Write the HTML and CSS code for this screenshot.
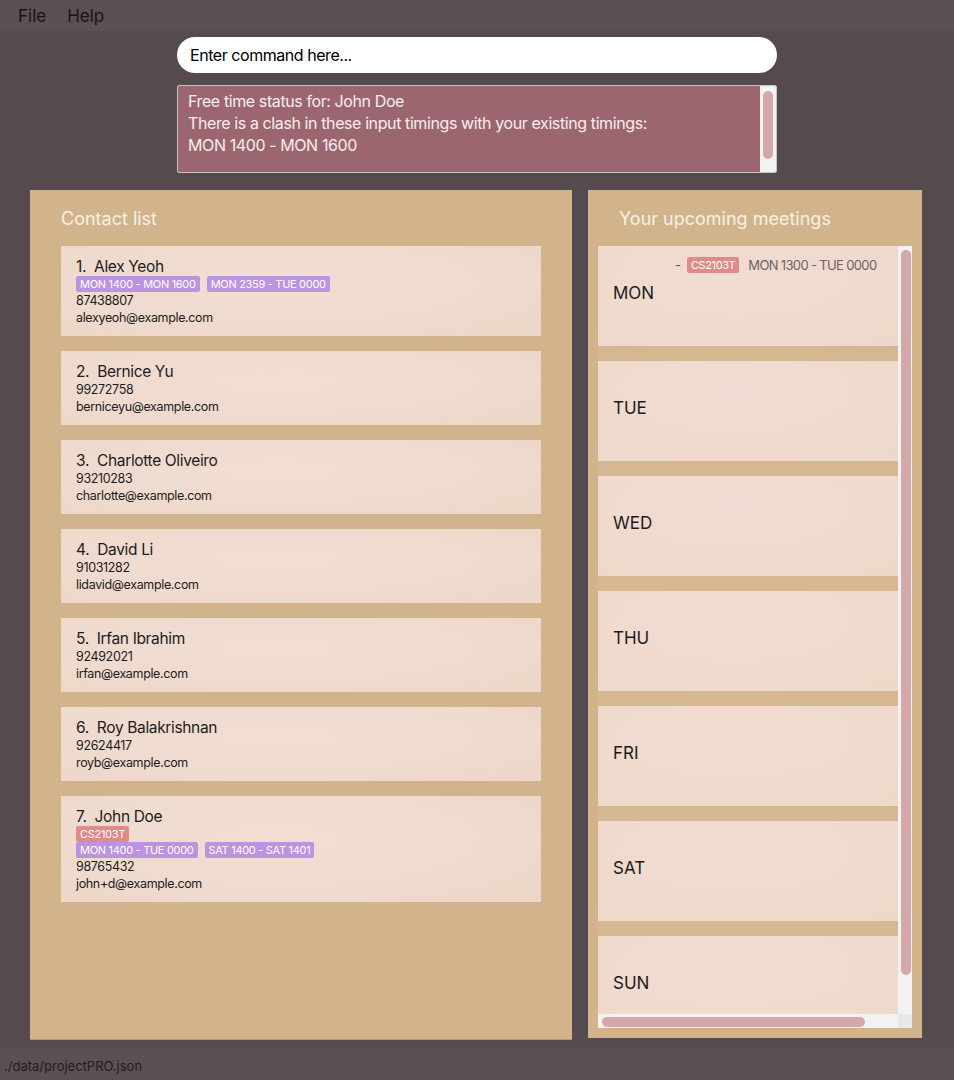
FILE: index.html
```html
<!DOCTYPE html>
<html>
<head>
<meta charset="utf-8">
<link rel="stylesheet" href="styles.css">
</head>
<body>
<div class="menubar">
  <span class="menu-item">File</span>
  <span class="menu-item">Help</span>
</div>
<div class="top">
  <div class="command">Enter command here...</div>
  <div class="result">
    <div class="result-text">Free time status for: John Doe<br>There is a clash in these input timings with your existing timings:<br>MON 1400 - MON 1600</div>
    <div class="vbar result-bar"><div class="thumb"></div></div>
  </div>
</div>
<div class="panels">
  <section class="panel contacts">
    <h2 class="panel-title">Contact list</h2>
    <div class="contact-list">
      <div class="card">
        <div class="name">1.&nbsp; Alex Yeoh</div>
        <div class="tags"><span class="tag time">MON 1400 - MON 1600</span><span class="tag time">MON 2359 - TUE 0000</span></div>
        <div class="line">87438807</div>
        <div class="line">alexyeoh@example.com</div>
      </div>
      <div class="card">
        <div class="name">2.&nbsp; Bernice Yu</div>
        <div class="line">99272758</div>
        <div class="line">berniceyu@example.com</div>
      </div>
      <div class="card">
        <div class="name">3.&nbsp; Charlotte Oliveiro</div>
        <div class="line">93210283</div>
        <div class="line">charlotte@example.com</div>
      </div>
      <div class="card">
        <div class="name">4.&nbsp; David Li</div>
        <div class="line">91031282</div>
        <div class="line">lidavid@example.com</div>
      </div>
      <div class="card">
        <div class="name">5.&nbsp; Irfan Ibrahim</div>
        <div class="line">92492021</div>
        <div class="line">irfan@example.com</div>
      </div>
      <div class="card">
        <div class="name">6.&nbsp; Roy Balakrishnan</div>
        <div class="line">92624417</div>
        <div class="line">royb@example.com</div>
      </div>
      <div class="card">
        <div class="name">7.&nbsp; John Doe</div>
        <div class="tags"><span class="tag mod">CS2103T</span></div>
        <div class="tags"><span class="tag time">MON 1400 - TUE 0000</span><span class="tag time">SAT 1400 - SAT 1401</span></div>
        <div class="line">98765432</div>
        <div class="line">john+d@example.com</div>
      </div>
    </div>
  </section>
  <section class="panel meetings">
    <h2 class="panel-title">Your upcoming meetings</h2>
    <div class="meeting-area">
      <div class="meeting-viewport">
        <div class="day">
          <div class="meeting-row"><span class="dash">-</span><span class="tag mod">CS2103T</span><span class="mtime">MON 1300 - TUE 0000</span></div>
          <div class="day-label">MON</div>
        </div>
        <div class="day"><div class="day-label">TUE</div></div>
        <div class="day"><div class="day-label">WED</div></div>
        <div class="day"><div class="day-label">THU</div></div>
        <div class="day"><div class="day-label">FRI</div></div>
        <div class="day"><div class="day-label">SAT</div></div>
        <div class="day"><div class="day-label">SUN</div></div>
      </div>
      <div class="vbar list-vbar"><div class="thumb"></div></div>
      <div class="hbar"><div class="thumb"></div></div>
      <div class="corner"></div>
    </div>
  </section>
</div>
<div class="statusbar">./data/projectPRO.json</div>
</body>
</html>
```
FILE: styles.css
```css
html, body {
  margin: 0;
  padding: 0;
}
body {
  width: 954px;
  height: 1080px;
  background: #554a4d;
  font-family: Inter, "Open Sans", "Liberation Sans", sans-serif;
  display: flex;
  flex-direction: column;
  overflow: hidden;
}
.menubar {
  height: 31px;
  background: #5b5053;
  display: flex;
  align-items: center;
  padding-left: 18px;
  gap: 21px;
  flex-shrink: 0;
}
.menu-item {
  font-size: 17px;
  color: #161616;
}
.top {
  display: flex;
  flex-direction: column;
  align-items: center;
}
.command {
  margin-top: 6px;
  width: 600px;
  height: 36px;
  box-sizing: border-box;
  background: #ffffff;
  border-radius: 18px;
  padding-left: 13px;
  display: flex;
  align-items: center;
  font-size: 16px;
  letter-spacing: -0.45px;
  color: #000;
}
.result {
  margin-top: 12px;
  width: 600px;
  height: 88px;
  box-sizing: border-box;
  border: 1px solid #c9c2c3;
  border-radius: 2px;
  background: #9c6670;
  display: flex;
  overflow: hidden;
}
.result-text {
  flex: 1;
  padding: 4px 10px 0 10px;
  font-size: 16px;
  line-height: 22px;
  letter-spacing: -0.4px;
  color: #f6eeef;
}
.vbar {
  background: #f2f2f2;
  display: flex;
  flex-direction: column;
}
.result-bar {
  width: 16px;
  padding: 5px 3px 0 3px;
  box-sizing: border-box;
}
.result-bar .thumb {
  height: 68px;
  background: #d4a8a9;
  border-radius: 5px;
}
.panels {
  margin-top: 17px;
  display: flex;
  padding-left: 30px;
  gap: 16px;
  align-items: flex-start;
}
.panel {
  background: #d1b48c;
  display: flex;
  flex-direction: column;
}
.panel-title {
  margin: 0;
  height: 55px;
  padding-left: 31px;
  display: flex;
  align-items: center;
  font-size: 18px;
  font-weight: 400;
  color: #f8f0e6;
  padding-top: 1px;
  box-sizing: border-box;
}
.contacts {
  width: 542px;
  height: 850px;
}
.contact-list {
  flex: 1;
  padding: 1px 31px 0 31px;
  display: flex;
  flex-direction: column;
  gap: 15px;
  border-bottom: 1px solid #b59a76;
}
.card {
  background: radial-gradient(ellipse at 45% 40%, #f1ddd2 0%, #efdace 60%, #ebd6c7 100%);
  padding: 10px 15px;
  display: flex;
  flex-direction: column;
  color: #1c1c1c;
}
.name {
  font-size: 15.5px;
  line-height: 20px;
  padding-top: 1px;
  margin-bottom: -1px;
  letter-spacing: -0.35px;
}
.line {
  font-size: 12.5px;
  line-height: 17px;
  letter-spacing: -0.35px;
}
.tags {
  display: flex;
  gap: 7px;
  height: 16px;
  align-items: center;
}
.tag {
  font-size: 11px;
  line-height: 16px;
  height: 16px;
  padding: 0 4px;
  border-radius: 2px;
  letter-spacing: -0.3px;
  color: #ffffff;
}
.tag.time { background: #bb93e0; }
.tag.mod { background: #e08a8a; }
.meetings {
  width: 334px;
  height: 848px;
}
.meeting-area {
  margin: 1px 10px 0 10px;
  display: grid;
  grid-template-columns: 300px 14px;
  grid-template-rows: 768px 14px;
}
.meeting-viewport {
  overflow: hidden;
  background: #d5b892;
}
.list-vbar {
  padding: 4px 1px 0 3px;
}
.list-vbar .thumb {
  height: 725px;
  background: #d4a8a9;
  border-radius: 5px;
}
.hbar {
  background: #f2f2f2;
  padding: 3px 0 1px 4px;
  display: flex;
}
.hbar .thumb {
  width: 263px;
  background: #d4a8a9;
  border-radius: 5px;
}
.corner {
  background: #e8e8e8;
}
.day {
  width: 342px;
  height: 100px;
  margin-bottom: 15px;
  background: radial-gradient(ellipse at 40% 30%, #f2dbd2 0%, #efdacd 60%, #ecd8c9 100%);
  display: grid;
  grid-template-areas: "cell";
}
.day-label {
  grid-area: cell;
  align-self: center;
  padding-left: 15px;
  margin-top: -6px;
  font-size: 17px;
  color: #1c1c1c;
}
.meeting-row {
  grid-area: cell;
  align-self: start;
  margin-top: 11px;
  margin-left: 77px;
  display: flex;
  align-items: center;
  height: 16px;
}
.dash {
  font-size: 13px;
  color: #555;
  margin-right: 6px;
}
.meeting-row .tag {
  letter-spacing: -0.4px;
}
.mtime {
  margin-left: 9px;
  font-size: 13px;
  letter-spacing: -0.65px;
  color: #6b6464;
}
.statusbar {
  margin-top: auto;
  height: 32px;
  background: #5b5053;
  padding-left: 4px;
  display: flex;
  align-items: center;
  padding-top: 4px;
  box-sizing: border-box;
  font-size: 13px;
  color: #1e1e1e;
}
```
